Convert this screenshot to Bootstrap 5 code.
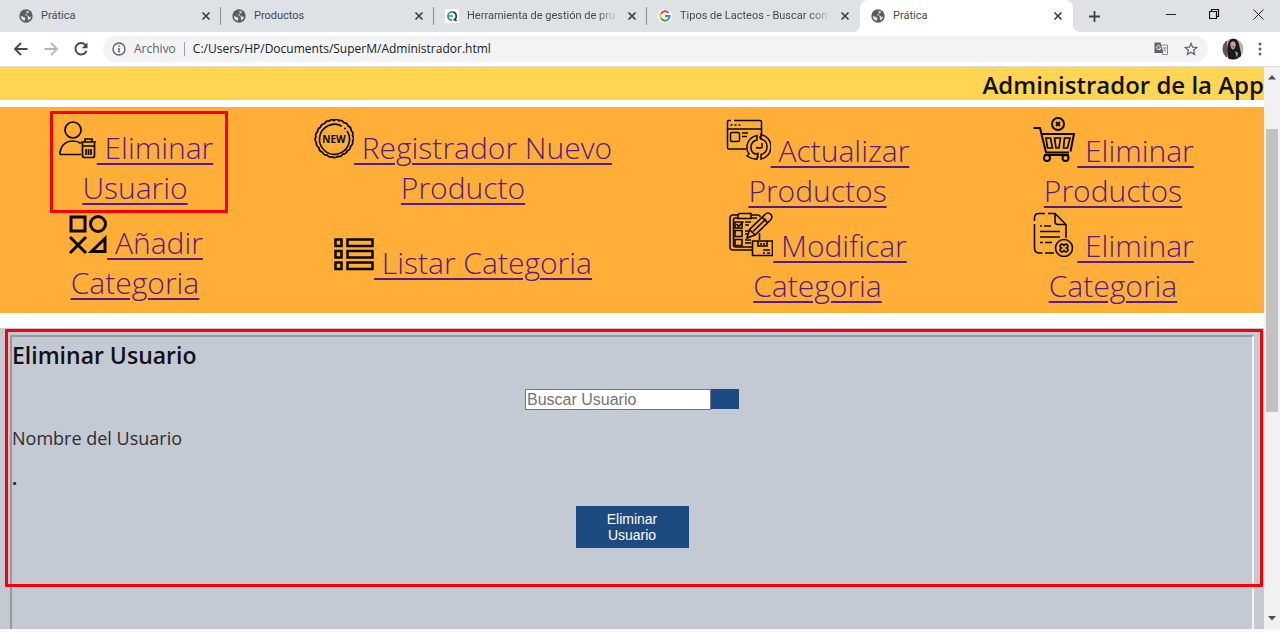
<!DOCTYPE html>
<html lang="es">
<head>
<meta charset="utf-8">
<meta name="viewport" content="width=device-width, initial-scale=1">
<title>Prática</title>
<link href="https://cdn.jsdelivr.net/npm/bootstrap@5.3.0/dist/css/bootstrap.min.css" rel="stylesheet">
<style>
body{font-family:"Open Sans","Noto Sans",sans-serif;color:#111;background:#fff}
button{border:0;background:none;padding:0;color:inherit}
/* browser frame */
.tabstrip{background:#dee1e6;height:32px;padding-left:8px;font-size:11px;font-family:Roboto,"Open Sans",sans-serif;color:#45494d}
.tab-item{flex:0 1 213px;min-width:0;padding:0 10px 0 11px;gap:8px;position:relative}
.tab-item.ruled::after{content:"";position:absolute;right:0;top:7px;height:18px;width:1px;background:#8a8d91}
.tab-item a{color:inherit;text-decoration:none;overflow:hidden;white-space:nowrap;flex:1 1 0}
.tab-item.faded a{-webkit-mask-image:linear-gradient(90deg,#000 85%,transparent)}
.tab-item.current{background:#fff;border-radius:8px 8px 0 0}
.tab-item.current::before{content:"";position:absolute;left:-8px;bottom:0;width:8px;height:8px;background:radial-gradient(circle at 0 0,transparent 8px,#fff 8px)}
.tab-item.current::after{content:"";position:absolute;right:-8px;bottom:0;width:8px;height:8px;background:radial-gradient(circle at 100% 0,transparent 8px,#fff 8px)}
.tabstrip svg,.toolbar svg{display:block;flex:none}
.win-buttons{gap:33px;padding-right:16px;height:28px}
.toolbar{height:35px;padding:0 18px 0 13px;border-bottom:1px solid #dcdcdc;gap:14px;color:#5f6368}
.address{background:#f1f3f4;border-radius:13px;height:26px;padding:0 10px 0 9px;gap:8px;font-size:12px}
.address input{border:0;background:none;padding:0;outline:0;color:#202124;min-width:0;font-size:12px}
.address .rule{width:1px;height:14px;background:#9aa0a6}
/* page */
.app-title{background:#ffd653;height:33px;font-size:24px;line-height:35px;font-weight:600;color:#111;text-align:right}
.menu-grid{background:#ffaf38;margin-top:7px;padding:9px 17px 7px 0;display:grid;grid-template-columns:270fr 386fr 323fr 268fr;grid-auto-rows:95px;align-items:center;justify-items:center;text-align:center}
.menu-grid a{font-size:30px;line-height:40px;font-weight:300;color:#551a8b;text-decoration:underline;text-decoration-thickness:2px;text-underline-offset:4px;text-decoration-skip-ink:auto;white-space:nowrap}
.menu-grid svg{color:#0b0700;vertical-align:baseline}
.outlined{position:relative}
.red-frame{position:absolute;border:3px solid #f80006;pointer-events:none;border-radius:1px}
.outlined .red-frame{inset:-8px -15px -5px -7px}
.panel-zone{background:#c4cad4;margin-top:15px;padding:7px 10px 0}
.panel-zone>.red-frame{top:1px;left:5px;right:1px;height:258px}
.form-panel{border:2px solid #999;border-right-color:#f1f1f1;border-bottom:0}
.form-panel h2{font-size:23px;line-height:36px;font-weight:600;margin:0}
.name-label{font-size:18px;line-height:24px;font-weight:400;color:#2b2d30}
.search-box{width:186px;height:21px;border:1px solid #767676;padding:0 1px;font:16px/18px "Liberation Sans",Arial,sans-serif;color:#222;background:#fff;outline:0}
.search-box::placeholder{color:#757575;opacity:1}
.btn-find{width:28px;height:20px;background:#1e4a82}
.btn-remove{width:113px;height:42px;background:#1e4a82;color:#fff;font:14px/16px "Liberation Sans",Arial,sans-serif;padding:0 24px}
.scroller{width:16px;background:#f1f1f1;padding:0 2px}
.scroller .thumb{background:#c1c1c1;height:283px;margin-top:49px;width:12px}
</style>
<script src="https://cdn.jsdelivr.net/npm/bootstrap@5.3.0/dist/js/bootstrap.bundle.min.js"></script>
</head>
<body class="d-flex flex-column min-vh-100">
<svg width="0" height="0" class="position-absolute" aria-hidden="true">
  <symbol id="globe" viewBox="0 0 14 14"><circle cx="7" cy="7" r="6.700" fill="#5a5e62"/><path d="M1.800 7.200c1.500-.2 2.300.2 3 .8.500.5 1.700.4 1.700 1.500 0 .9-.8.900-.8 2.300C3.600 11.500 2 9.700 1.800 7.200zM7.300 2l2.500.6c.6.800-.3 1.200-.9 1.300-.7.100-.5 1-1.200 1.300-.8.300-1.500 0-1.400.8.100.8 1.700.5 2.700.7 1 .2.900 1.200 1.700 1.400.8.100 1.200-.4 1.500-.8-.2 2-1.500 3.500-2.800 4.200" fill="#dee1e6"/></symbol>
  <symbol id="close" viewBox="0 0 10 10"><path d="M1.500 1.500l7 7M8.500 1.500l-7 7" stroke="#3c4043" stroke-width="1.700"/></symbol>
</svg>

<header>
  <nav class="tabstrip d-flex" aria-label="Pestañas">
    <div class="tab-item ruled d-flex align-items-center"><svg width="14" height="14"><use href="#globe"/></svg><a href="#">Prática</a><button aria-label="Cerrar"><svg width="10" height="10"><use href="#close"/></svg></button></div>
    <div class="tab-item ruled d-flex align-items-center"><svg width="14" height="14"><use href="#globe"/></svg><a href="#">Productos</a><button aria-label="Cerrar"><svg width="10" height="10"><use href="#close"/></svg></button></div>
    <div class="tab-item ruled faded d-flex align-items-center"><svg width="14" height="14" viewBox="0 0 14 14"><path fill="#fff" d="M0 0h14v14H0z"/><path d="M8 3A4.200 4.200 0 1 0 7 11.300M3.500 7H8" fill="none" stroke="#1aa67a" stroke-width="1.700"/><path d="M8 3A4.300 4.300 0 0 1 8.500 11.200M9.500 10l2 2" fill="none" stroke="#163f3c" stroke-width="1.600"/></svg><a href="#">Herramienta de gestión de pru</a><button aria-label="Cerrar"><svg width="10" height="10"><use href="#close"/></svg></button></div>
    <div class="tab-item faded d-flex align-items-center"><svg width="14" height="14" viewBox="0 0 14 14"><circle cx="7" cy="7" r="7" fill="#fff"/><g fill="none" stroke-width="2"><path d="M10.500 3.800A4.600 4.600 0 0 0 3 4.700" stroke="#ea4335"/><path d="M3 4.700a4.600 4.600 0 0 0 0 4.600" stroke="#fbbc05"/><path d="M3 9.300a4.600 4.600 0 0 0 7 1.200" stroke="#34a853"/><path d="M10 10.500A4.500 4.500 0 0 0 11.600 7H7" stroke="#4285f4"/></g></svg><a href="#">Tipos de Lacteos - Buscar con</a><button aria-label="Cerrar"><svg width="10" height="10"><use href="#close"/></svg></button></div>
    <div class="tab-item current d-flex align-items-center"><svg width="14" height="14"><use href="#globe"/></svg><a href="#">Prática</a><button aria-label="Cerrar"><svg width="10" height="10"><use href="#close"/></svg></button></div>
    <button class="ms-3" aria-label="Nueva pestaña"><svg width="11" height="11" viewBox="0 0 11 11"><path d="M5.500 0v11M0 5.500h11" stroke="#3c4043" stroke-width="1.800"/></svg></button>
    <div class="win-buttons d-flex align-items-center ms-auto">
      <button aria-label="Minimizar"><svg width="10" height="10" viewBox="0 0 10 10"><path d="M0 5.500h10" stroke="#222"/></svg></button>
      <button aria-label="Restaurar"><svg width="11" height="10" viewBox="0 0 11 10"><path d="M.5 2.500h7v7h-7zM2.500 2.500v-2h7v7h-2" fill="none" stroke="#111" stroke-width="1.200"/></svg></button>
      <button aria-label="Cerrar ventana"><svg width="11" height="11" viewBox="0 0 11 11"><path d="M.5.5l10 10M10.500.5l-10 10" stroke="#222"/></svg></button>
    </div>
  </nav>
  <div class="toolbar d-flex align-items-center">
    <button aria-label="Atrás"><svg width="16" height="16" viewBox="0 0 16 16"><path d="M14.500 8H2.500M8 2L2 8l6 6" fill="none" stroke="#45494d" stroke-width="1.800"/></svg></button>
    <button aria-label="Adelante"><svg width="16" height="16" viewBox="0 0 16 16"><path d="M1.500 8h12M8 2l6 6-6 6" fill="none" stroke="#b5b7b9" stroke-width="1.800"/></svg></button>
    <button aria-label="Recargar"><svg width="16" height="16" viewBox="0 0 16 16"><path d="M12.700 4.300A5.700 5.700 0 1 0 13.500 9.800" fill="none" stroke="#45494d" stroke-width="1.900"/><path d="M14.500 1.500v5.700H8.800z" fill="#45494d"/></svg></button>
    <div class="address d-flex align-items-center flex-grow-1">
      <svg width="14" height="14" viewBox="0 0 14 14"><circle cx="7" cy="7" r="6" fill="none" stroke="#5f6368" stroke-width="1.400"/><path d="M7 6v4.500M7 3.300v1.500" stroke="#5f6368" stroke-width="1.500"/></svg>
      <label for="url">Archivo</label><span class="rule"></span>
      <input id="url" class="flex-grow-1" value="C:/Users/HP/Documents/SuperM/Administrador.html">
      <button aria-label="Traducir"><svg width="14" height="14" viewBox="0 0 14 14"><path d="M7 3h6.500v9.500H8.500L7 9" fill="#f1f3f4" stroke="#8c9094"/><path d="M.5.500h6l3 10.500h-9z" fill="#5f6368"/><path d="M6.300 4.200A2.100 2.100 0 1 0 6.800 6H5" stroke="#fff" fill="none"/><path d="M9 6h4M11 5v1c0 1-1 2.500-2 3M9.800 6.800L12.500 10" stroke="#7c8084" fill="none" stroke-width=".8"/></svg></button>
      <button class="ms-2" aria-label="Favoritos"><svg width="14" height="14" viewBox="0 0 14 14"><path d="M7 1.300l1.600 3.900 4.200.3-3.200 2.700 1 4.200L7 10.200l-3.600 2.200 1-4.200L1.200 5.500l4.200-.3z" fill="none" stroke="#5f6368" stroke-width="1.200"/></svg></button>
    </div>
    <button aria-label="Perfil"><svg width="22" height="22" viewBox="0 0 22 22"><defs><clipPath id="av"><circle cx="11" cy="11" r="10.500"/></clipPath></defs><g clip-path="url(#av)"><path fill="#b9b4b0" d="M0 0h22v22H0z"/><path fill="#5f5854" d="M0 3h5v19H0z"/><path d="M7 22C4 15 5 5 8 2c3-3 8-1 9 4 1 6 3 10 2 16z" fill="#1c1a1c"/><path d="M8.500 5c1-2 4-2 5 0 .6 3-.6 6-2.500 6.500C9 11 8 8 8.500 5z" fill="#d3a093"/><path d="M9.500 8.800h3" stroke="#a8383a"/><path d="M13 13l3 2-1 5z" fill="#a2aaab"/></g></svg></button>
    <button aria-label="Menú"><svg width="4" height="14" viewBox="0 0 4 14" fill="#5f6368"><circle cx="2" cy="2" r="1.500"/><circle cx="2" cy="7" r="1.500"/><circle cx="2" cy="12" r="1.500"/></svg></button>
  </div>
</header>

<div class="d-flex flex-grow-1 border-bottom border-3 border-light">
<main class="flex-grow-1 d-flex flex-column">
  <h1 class="app-title mb-0 mt-0">Administrador de la App</h1>
  <nav class="menu-grid">
    <div class="outlined"><svg width="40" height="40" viewBox="0 0 40 40" fill="none" stroke="currentColor" stroke-width="1.700"><circle cx="16" cy="11" r="8"/><path d="M3 35.500c0-8 5-13.500 13-13.500 3 0 6 1 8 2.500M3 35.500h21"/><path d="M24 23h15M28 23v-3h7v3M25.500 24v12.500q0 2 2 2h8q2 0 2-2V24M25 27h13" /><path d="M29 30v6M31.500 30v6M34 30v6"/></svg><a href="#"> Eliminar<br>Usuario</a><span class="red-frame"></span></div>
    <div><svg width="40" height="40" viewBox="0 0 40 40"><path d="M20 1.500Q22.500-.8 25 1.700Q28.300.6 29.800 3.600Q33.300 3.600 34 6.900Q37.300 8 37 11.400Q39.800 13.300 38.500 16.500Q40.700 19.300 38.600 22Q39.400 25.400 36.600 27.200Q36.500 30.700 33.300 31.700Q32.200 35 28.800 35.200Q26.900 38.100 23.600 37.400Q21 39.700 18.200 37.800Q14.900 38.900 12.900 36.100Q9.500 36.100 8.200 33Q4.900 32 4.700 28.600Q1.700 26.900 2.400 23.600Q.1 21 1.900 18.100Q.8 14.900 3.500 12.900Q3.300 9.500 6.400 8.200Q7.200 4.900 10.600 4.500Q12.200 1.500 15.500 2Q17.600-.6 20 1.500Z" fill="none" stroke="currentColor" stroke-width="1.700"/><path d="M33 12A15 15 0 1 1 28 7.300" fill="none" stroke="currentColor" stroke-width="1.600"/><circle cx="31" cy="9.500" r="1" fill="currentColor"/><text x="20" y="23.500" text-anchor="middle" font-family="Open Sans" font-size="10" font-weight="700" fill="currentColor">NEW</text></svg><a href="#"> Registrador Nuevo<br>Producto</a></div>
    <div><svg width="45" height="45" viewBox="0 0 45 45" fill="none" stroke="currentColor" stroke-width="1.500"><path d="M5 3.500H2.500q-1 0-1 1v26q0 1.500 1.500 1.500h17M8 3.500h26q1.500 0 1.500 1.500v13M1.500 12h34M4.500 8h2M8.500 8h2M12.500 8h2"/><path d="M6 15.500h6q1.500 0 1.500 1.500v6q0 1.500-1.500 1.500H6q-1.500 0-1.500-1.500v-6q0-1.500 1.500-1.500zM16 16h6M16 19.500h5"/><path d="M31 18.500a12 12 0 0 0-8 18.500l-2 2q5 3.500 10 3l1-5.500-3 .5a7.500 7.500 0 0 1 2-14zM35 17.500a12.500 12.500 0 0 1 0 24.500v-4.500a8 8 0 0 0 0-15.500zM35 22l-1.500-2.500M31 37.500l1.500 3"/><path d="M36 26v4.500q-3 1-6 0"/></svg><a href="#"> Actualizar<br>Productos</a></div>
    <div><svg width="45" height="45" viewBox="0 0 45 45" fill="none" stroke="currentColor" stroke-width="2"><circle cx="26" cy="7" r="6"/><path d="M24 5l4 4M28 5l-4 4" /><path d="M1.500 11H8l6 24.500h23M10 17h32l-3.500 17.500"/><path d="M14 21h4.500l2 10h-5zM22.500 21h6l-1.500 10h-3zM32.500 21h5.500l-2.500 10h-4z" stroke-width="1.700"/><path d="M12 38h25"/><circle cx="15" cy="41" r="3"/><circle cx="33.500" cy="41" r="3"/></svg><a href="#"> Eliminar<br>Productos</a></div>
    <div><svg width="40" height="40" viewBox="0 0 40 40" fill="none" stroke="currentColor" stroke-width="3"><path d="M4 3h14v14H4z"/><circle cx="31" cy="10" r="7.500"/><path d="M3 23l16 16M19 23L3 39M38 24.500v13H24.500z"/></svg><a href="#"> Añadir<br>Categoria</a></div>
    <div><svg width="40" height="40" viewBox="0 0 40 40" fill="none" stroke="currentColor" stroke-width="2.500"><path d="M1.500 5.500h6v6.500h-6zM13.500 5.500h25v6.500h-25zM1.500 17h6v6.500h-6zM13.500 17h25v6.500h-25zM1.500 28.500h6v6.500h-6zM13.500 28.500h25v6.500h-25z"/></svg><a href="#"> Listar Categoria</a></div>
    <div><svg width="45" height="45" viewBox="0 0 45 45" fill="none" stroke="currentColor" stroke-width="1.600"><path d="M10 3H5Q2 3 2 6v29q0 3 3 3h20M10 6H7Q5.500 6 5.500 7.500v25.500q0 2 2 2h17M24 3h6q2 0 2 2M23 6h6M31.500 21v7"/><path d="M12 1.500h11v5H10v-3q0-2 2-2zM7 10h7v6H7zM7 18.500h7v6H7zM7 27.500h7v6H7zM8.500 12l2 2.500 5-5M17 10h6M17 13h4M17 19h3M17 22h3M17 28h6M17 31h6"/><path d="M19 26l2.500-8.500L37 2.500q3-3 6 0 2 3-.5 5.500L27 23zM34 5l6 6M22 18l5 5M25 19.500L38 7" fill="#ffaf38"/><path d="M24.500 29h20v14.500h-20zM30 29v5h9v-5M33 33v-2M36 33v-2M35 38h7M35 41h2M39 41h3" fill="#ffaf38"/></svg><a href="#"> Modificar<br>Categoria</a></div>
    <div><svg width="45" height="45" viewBox="0 0 45 45" fill="none" stroke="currentColor" stroke-width="1.600"><path d="M2.500 9V6q0-4.500 4.500-4.500h6M16 1.500h7l11 11V26M23 1.500v8q0 3 3 3h8M2.500 12v24q0 5 5 5h3M13 41h9M8 14h2M12 14h7M8 19.500h20M8 25h20M8 30.500h3M13 30.500h7"/><circle cx="32" cy="36" r="8.500"/><path d="M28.500 33q1.500-2 3.500.5 2-2.500 3.500-.5 1.500 1.500-1 3 2.500 1.500 1 3-1.500 2-3.500-.5-2 2.500-3.500.5-1.500-1.500 1-3-2.500-1.500-1-3z"/></svg><a href="#"> Eliminar<br>Categoria</a></div>
  </nav>
  <section class="panel-zone position-relative flex-grow-1 d-flex flex-column">
    <form class="form-panel flex-grow-1" onsubmit="return false">
      <h2>Eliminar Usuario</h2>
      <div class="d-flex justify-content-center mt-3">
        <input class="search-box" type="text" placeholder="Buscar Usuario" aria-label="Buscar Usuario"><button class="btn-find" aria-label="Buscar"></button>
      </div>
      <p class="name-label mt-3 mb-3">Nombre del Usuario</p>
      <p class="name-label fw-bold mb-3">.</p>
      <div class="text-center"><button class="btn-remove">Eliminar Usuario</button></div>
    </form>
    <span class="red-frame"></span>
  </section>
</main>
<aside class="scroller d-flex flex-column align-items-center pt-2 pb-2" aria-hidden="true">
  <svg width="8" height="5" viewBox="0 0 8 5"><path d="M0 4.500L4 0l4 4.500z" fill="#505050"/></svg>
  <div class="thumb"></div>
  <svg class="mt-auto" width="8" height="5" viewBox="0 0 8 5"><path d="M0 0h8L4 4.500z" fill="#505050"/></svg>
</aside>
</div>
</body>
</html>
